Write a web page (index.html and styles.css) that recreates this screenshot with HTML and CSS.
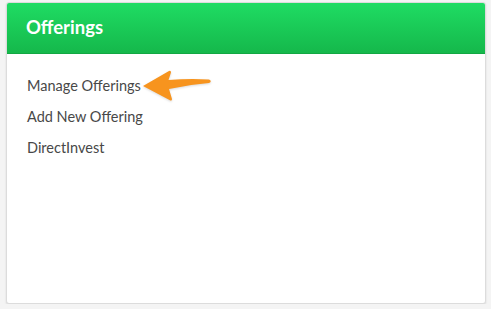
FILE: index.html
```html
<!DOCTYPE html>
<html lang="en">
<head>
    <meta charset="UTF-8">
    <meta name="viewport" content="width=device-width, initial-scale=1.0">
    <title>Offerings</title>
    <link rel="stylesheet" href="styles.css">
</head>
<body>
    <div class="panel">
        <div class="panel-header">
            <h2>Offerings</h2>
        </div>
        <ul class="panel-links">
            <li>
                <a href="#">Manage Offerings</a>
                <svg class="pointer" width="74" height="34" viewBox="0 0 74 34">
                    <path d="M2 17 L28 2 Q30 1 30 3.5 L27.5 11 Q48 9.5 68 10.5 Q71.5 12 68 14 Q48 15.5 28 20 L31 30 Q31 32.5 28.5 31 Z" fill="#f7941e"/>
                </svg>
            </li>
            <li><a href="#">Add New Offering</a></li>
            <li><a href="#">DirectInvest</a></li>
        </ul>
    </div>
</body>
</html>
```

FILE: styles.css
```css
body {
    margin: 0;
    background: #f4f4f4;
    font-family: Lato, 'Open Sans', sans-serif;
}
.panel {
    margin: 2px 0 0 6px;
    width: 480px;
    height: 302px;
    box-sizing: border-box;
    background: #fff;
    border: 1px solid #dcdcdc;
    border-radius: 3px;
    box-shadow: 0 1px 2px rgba(0, 0, 0, 0.12);
    overflow: hidden;
}
.panel-header {
    height: 50px;
    background: linear-gradient(#1fdc63, #15b84b);
    border-bottom: 1px solid #12a743;
    display: flex;
    align-items: center;
    padding: 0 19px;
}
.panel-header h2 {
    margin: 0 0 2px;
    color: #fff;
    font-size: 18.5px;
    font-weight: 700;
}
.panel-links {
    list-style: none;
    margin: 0;
    padding: 16px 20px;
}
.panel-links li {
    display: flex;
    align-items: center;
    height: 31px;
}
.panel-links a {
    color: #484848;
    font-size: 14.5px;
    text-decoration: none;
}
.pointer {
    margin-left: 0;
    filter: drop-shadow(0 1px 1px rgba(0, 0, 0, 0.15));
}
```
